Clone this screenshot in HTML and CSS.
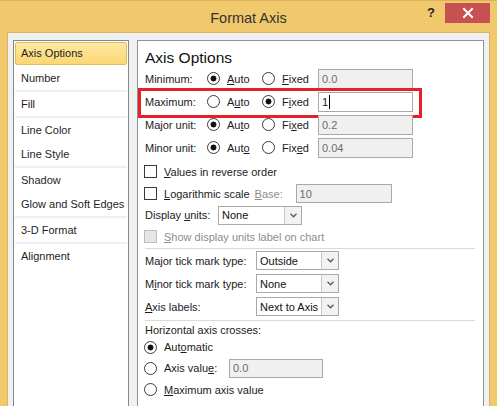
FILE: index.html
```html
<!DOCTYPE html>
<html>
<head>
<meta charset="utf-8">
<link rel="stylesheet" href="styles.css">
</head>
<body>
<div class="window">
  <div class="titlebar">
    <div></div>
    <div class="title">Format Axis</div>
    <div class="controls">
      <span class="help">?</span>
      <span class="close"><svg width="12" height="12" viewBox="0 0 12 12"><path d="M2 2 L10 10 M10 2 L2 10" stroke="#fff" stroke-width="2" stroke-linecap="square"/></svg></span>
    </div>
  </div>
  <div class="client">
    <div class="nav">
      <div class="nav-item selected">Axis Options</div>
      <div class="nav-item">Number</div>
      <div class="nav-sep"></div>
      <div class="nav-item">Fill</div>
      <div class="nav-sep"></div>
      <div class="nav-item">Line Color</div>
      <div class="nav-item">Line Style</div>
      <div class="nav-sep"></div>
      <div class="nav-item">Shadow</div>
      <div class="nav-item">Glow and Soft Edges</div>
      <div class="nav-sep"></div>
      <div class="nav-item">3-D Format</div>
      <div class="nav-sep"></div>
      <div class="nav-item">Alignment</div>
    </div>
    <div class="panel">
      <div class="panel-title">Axis Options</div>

      <div class="axis-row">
        <span class="lbl">Minimum:</span>
        <span class="opt"><span class="radio on"></span><span><u>A</u>uto</span></span>
        <span class="opt"><span class="radio"></span><span><u>F</u>ixed</span></span>
        <span class="field disabled">0.0</span>
      </div>
      <div class="axis-row">
        <span class="lbl">Maximum:</span>
        <span class="opt"><span class="radio"></span><span>A<u>u</u>to</span></span>
        <span class="opt"><span class="radio on"></span><span>F<u>i</u>xed</span></span>
        <span class="field active">1<span class="caret"></span></span>
        <span class="highlight"></span>
      </div>
      <div class="axis-row">
        <span class="lbl">Major unit:</span>
        <span class="opt"><span class="radio on"></span><span>Au<u>t</u>o</span></span>
        <span class="opt"><span class="radio"></span><span>Fi<u>x</u>ed</span></span>
        <span class="field disabled">0.2</span>
      </div>
      <div class="axis-row">
        <span class="lbl">Minor unit:</span>
        <span class="opt"><span class="radio on"></span><span>Aut<u>o</u></span></span>
        <span class="opt"><span class="radio"></span><span>Fix<u>e</u>d</span></span>
        <span class="field disabled">0.04</span>
      </div>

      <div class="check-row r-values">
        <span class="checkbox"></span><span><u>V</u>alues in reverse order</span>
      </div>
      <div class="check-row r-log">
        <span class="checkbox"></span><span><u>L</u>ogarithmic scale</span>
        <span class="base-lbl"><u>B</u>ase:</span>
        <span class="field disabled base-field">10</span>
      </div>
      <div class="check-row r-units">
        <span class="units-lbl">Display <u>u</u>nits:</span>
        <span class="select units-select"><span class="sel-text">None</span><span class="sel-btn"><svg width="7" height="5" viewBox="0 0 7 5"><path d="M0.5 0.8 L3.5 3.8 L6.5 0.8" fill="none" stroke="#5a5a5a" stroke-width="1.3"/></svg></span></span>
      </div>
      <div class="check-row r-show disabled-text">
        <span class="checkbox dis"></span><span><u>S</u>how display units label on chart</span>
      </div>
      <div class="sep"></div>

      <div class="tick-row">
        <span class="tick-lbl">Ma<u>j</u>or tick mark type:</span>
        <span class="select tick-select"><span class="sel-text">Outside</span><span class="sel-btn"><svg width="7" height="5" viewBox="0 0 7 5"><path d="M0.5 0.8 L3.5 3.8 L6.5 0.8" fill="none" stroke="#5a5a5a" stroke-width="1.3"/></svg></span></span>
      </div>
      <div class="tick-row">
        <span class="tick-lbl">M<u>i</u>nor tick mark type:</span>
        <span class="select tick-select"><span class="sel-text">None</span><span class="sel-btn"><svg width="7" height="5" viewBox="0 0 7 5"><path d="M0.5 0.8 L3.5 3.8 L6.5 0.8" fill="none" stroke="#5a5a5a" stroke-width="1.3"/></svg></span></span>
      </div>
      <div class="tick-row">
        <span class="tick-lbl"><u>A</u>xis labels:</span>
        <span class="select tick-select"><span class="sel-text">Next to Axis</span><span class="sel-btn"><svg width="7" height="5" viewBox="0 0 7 5"><path d="M0.5 0.8 L3.5 3.8 L6.5 0.8" fill="none" stroke="#5a5a5a" stroke-width="1.3"/></svg></span></span>
      </div>
      <div class="sep sep2"></div>

      <div class="cross-lbl">Horizontal axis crosses:</div>
      <div class="cross-row r-auto">
        <span class="radio on"></span><span>Aut<u>o</u>matic</span>
      </div>
      <div class="cross-row r-axisval">
        <span class="radio"></span><span class="axisval-lbl">Axis valu<u>e</u>:</span>
        <span class="field disabled axisval-field">0.0</span>
      </div>
      <div class="cross-row r-max">
        <span class="radio"></span><span><u>M</u>aximum axis value</span>
      </div>
    </div>
  </div>
</div>
</body>
</html>
```
FILE: styles.css
```css
html, body {
  margin: 0;
  padding: 0;
}
body {
  width: 497px;
  height: 406px;
  overflow: hidden;
  background: #f1c86b;
  font-family: "Liberation Sans", Arial, sans-serif;
  font-size: 11px;
  color: #1b1b1b;
}
u {
  text-decoration: underline;
  text-underline-offset: 1px;
}
.window {
  display: flex;
  flex-direction: column;
  height: 406px;
  border-top: 1px solid #dcb35a;
  box-sizing: border-box;
}
.titlebar {
  height: 31px;
  display: grid;
  grid-template-columns: 1fr auto 1fr;
  align-items: start;
}
.title {
  font-size: 14.5px;
  color: #333;
  padding-top: 9px;
  line-height: 16px;
}
.controls {
  display: flex;
  justify-content: flex-end;
  align-items: flex-start;
}
.help {
  font-weight: bold;
  font-size: 13px;
  line-height: 14px;
  color: #262626;
  margin-top: 5px;
  margin-right: 10px;
}
.close {
  width: 45px;
  height: 20px;
  margin-top: 2px;
  margin-right: 7px;
  background: #c75050;
  display: flex;
  align-items: center;
  justify-content: center;
}
.close svg { display: block; }
.client {
  flex: 1;
  margin: 0 7px 0 7px;
  background: #f0f0f0;
  border: 1px solid #d8b460;
  border-bottom: none;
  display: flex;
  gap: 8px;
  padding: 7px 5px 0 5px;
  overflow: hidden;
  min-height: 0;
}
.nav {
  width: 112px;
  flex: none;
  background: #fff;
  border: 1px solid #828790;
  border-bottom: none;
  padding: 1px;
  box-sizing: content-box;
}
.nav-item {
  height: 24px;
  box-sizing: border-box;
  border: 1px solid transparent;
  border-radius: 2px;
  padding-left: 5px;
  line-height: 22px;
  white-space: nowrap;
  color: #1e1e1e;
}
.nav-item.selected {
  background: linear-gradient(#fde9a3, #fbd673);
  border-color: #e2bc5c;
  height: 23px;
  margin-bottom: 1px;
  line-height: 21px;
}
.nav-sep {
  height: 2px;
  background: #eeeef4;
}
.panel {
  flex: 1;
  background: #fff;
  border: 1px solid #8e9399;
  border-bottom: none;
  padding: 8px 8px 0 7px;
  min-width: 0;
}
.panel-title {
  font-size: 15.5px;
  height: 18px;
  line-height: 18px;
  color: #111;
}
.axis-row {
  position: relative;
  height: 23px;
  display: grid;
  grid-template-columns: 62px 55px 56px 95px;
  align-items: center;
}
.opt {
  display: flex;
  align-items: center;
  gap: 7px;
}
.radio {
  width: 13px;
  height: 13px;
  box-sizing: border-box;
  border: 1px solid #3a3a3a;
  border-radius: 50%;
  background: #fff;
  flex: none;
}
.radio.on {
  background: radial-gradient(circle, #111 0 2.6px, #fff 3.3px);
}
.field {
  height: 20px;
  box-sizing: border-box;
  border: 1px solid #a9a9a9;
  padding-left: 3px;
  line-height: 18px;
  display: flex;
  align-items: center;
}
.field.disabled {
  background: #f0f0f0;
  color: #6d6d6d;
}
.field.active {
  background: #fff;
  color: #0d1a3a;
}
.caret {
  width: 1px;
  height: 14px;
  background: #000;
  margin-left: 1px;
}
.highlight {
  position: absolute;
  left: -7px;
  top: -2px;
  width: 284px;
  height: 30px;
  box-sizing: border-box;
  border: 3px solid #e4202b;
  pointer-events: none;
}
.check-row {
  display: flex;
  align-items: center;
  height: 22px;
}
.r-values { height: 23px; margin-top: 1px; }
.r-log { height: 21px; }
.r-units { height: 22px; }
.r-show { height: 21px; }
.checkbox {
  width: 13px;
  height: 13px;
  box-sizing: border-box;
  border: 1px solid #3a3a3a;
  background: #fff;
  margin-left: -1px;
  margin-right: 7px;
  flex: none;
}
.checkbox.dis {
  border-color: #bcbcbc;
  background: #e6e6e6;
}
.disabled-text { color: #8d8d8d; }
.base-lbl {
  color: #8d8d8d;
  margin-left: 5px;
  width: 41px;
}
.base-field {
  width: 96px;
  height: 19px;
}
.units-lbl {
  width: 73px;
}
.select {
  display: flex;
  align-items: stretch;
  box-sizing: border-box;
  border: 1px solid #a9a9a9;
  background: #fff;
  color: #111;
}
.units-select {
  width: 84px;
  height: 19px;
}
.sel-text {
  flex: 1;
  padding-left: 3px;
  display: flex;
  align-items: center;
  white-space: nowrap;
  overflow: hidden;
}
.sel-btn {
  width: 16px;
  flex: none;
  border-left: 1px solid #c8c8c8;
  background: #f2f2f2;
  display: flex;
  align-items: center;
  justify-content: center;
}
.sel-btn svg { display: block; }
.sep {
  height: 1px;
  background: #dadada;
  margin: 1px 0 0 0;
}
.tick-row {
  display: flex;
  align-items: center;
  height: 23px;
}
.tick-lbl {
  width: 111px;
}
.tick-select {
  width: 83px;
  height: 19px;
}
.sep2 { margin-top: 2px; }
.cross-lbl {
  height: 15px;
  line-height: 15px;
  margin-top: 2px;
}
.cross-row {
  display: flex;
  align-items: center;
  gap: 7px;
  margin-left: -1px;
}
.r-auto { height: 18px; }
.r-axisval { height: 24px; }
.r-max { height: 19px; }
.axisval-lbl {
  width: 58px;
}
.axisval-field {
  width: 94px;
  height: 19px;
}
```
